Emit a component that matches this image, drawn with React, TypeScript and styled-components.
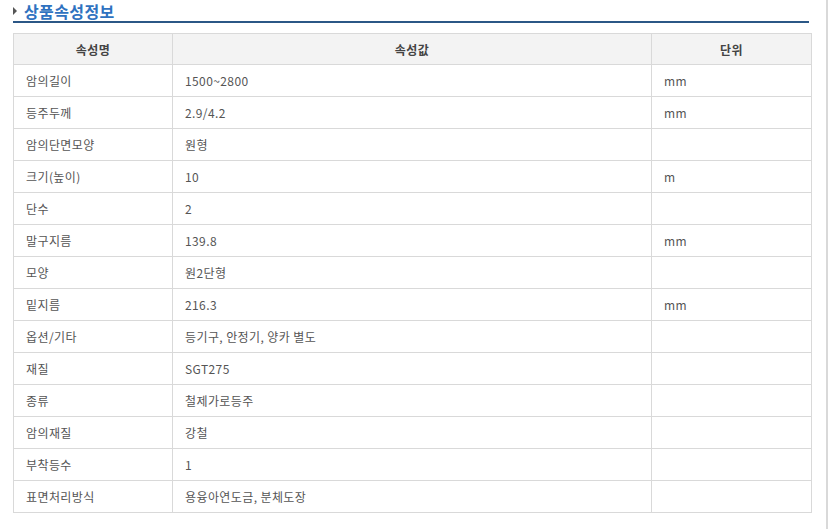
import styled, { createGlobalStyle } from "styled-components";

const GlobalStyle = createGlobalStyle`
  html, body {
    margin: 0;
    padding: 0;
    background: #ffffff;
  }
  body {
    font-family: "Noto Sans CJK KR", "Noto Sans", "Liberation Sans", sans-serif;
  }
`;

type Row = { name: string; value: string; unit?: string };

const rows: Row[] = [
  { name: "암의길이", value: "1500~2800", unit: "mm" },
  { name: "등주두께", value: "2.9/4.2", unit: "mm" },
  { name: "암의단면모양", value: "원형" },
  { name: "크기(높이)", value: "10", unit: "m" },
  { name: "단수", value: "2" },
  { name: "말구지름", value: "139.8", unit: "mm" },
  { name: "모양", value: "원2단형" },
  { name: "밑지름", value: "216.3", unit: "mm" },
  { name: "옵션/기타", value: "등기구, 안정기, 양카 별도" },
  { name: "재질", value: "SGT275" },
  { name: "종류", value: "철제가로등주" },
  { name: "암의재질", value: "강철" },
  { name: "부착등수", value: "1" },
  { name: "표면처리방식", value: "용융아연도금, 분체도장" },
];

export default function App() {
  return (
    <Page>
      <GlobalStyle />
      <Section>
        <TitleBar>
          <Arrow />
          <Title>상품속성정보</Title>
        </TitleBar>
        <Table>
          <colgroup>
            <col style={{ width: 159 }} />
            <col style={{ width: 479 }} />
            <col style={{ width: 160 }} />
          </colgroup>
          <thead>
            <tr>
              <Th>속성명</Th>
              <Th>속성값</Th>
              <Th>단위</Th>
            </tr>
          </thead>
          <tbody>
            {rows.map((r) => (
              <tr key={r.name}>
                <Td>{r.name}</Td>
                <Td>{r.value}</Td>
                <Td>{r.unit ?? ""}</Td>
              </tr>
            ))}
          </tbody>
        </Table>
      </Section>
    </Page>
  );
}

const Page = styled.div`
  width: 828px;
  min-height: 100vh;
  border-right: 2px solid #d9d9d9;
  box-sizing: border-box;
`;

const Section = styled.div`
  padding: 0 17px 0 13px;
`;

const TitleBar = styled.div`
  display: flex;
  align-items: center;
  gap: 7px;
  height: 21px;
  border-bottom: 2px solid #2b5786;
  margin-bottom: 10px;
`;

const Arrow = styled.span`
  width: 0;
  height: 0;
  border-top: 4px solid transparent;
  border-bottom: 4px solid transparent;
  border-left: 4px solid #555555;
  margin-top: 1px;
`;

const Title = styled.h2`
  margin: 0;
  font-size: 16px;
  font-weight: 700;
  line-height: 20px;
  color: #2f72c0;
  letter-spacing: 0.4px;
`;

const Table = styled.table`
  width: 798px;
  border-collapse: collapse;
  table-layout: fixed;
  font-size: 12px;
  letter-spacing: 0.4px;
`;

const Th = styled.th`
  height: 30px;
  padding: 0;
  background: #f3f3f3;
  border: 1px solid #d9d9d9;
  color: #444444;
  font-weight: 700;
  text-align: center;
`;

const Td = styled.td`
  height: 31px;
  padding: 0 12px;
  border: 1px solid #d9d9d9;
  color: #555555;
  text-align: left;
`;
